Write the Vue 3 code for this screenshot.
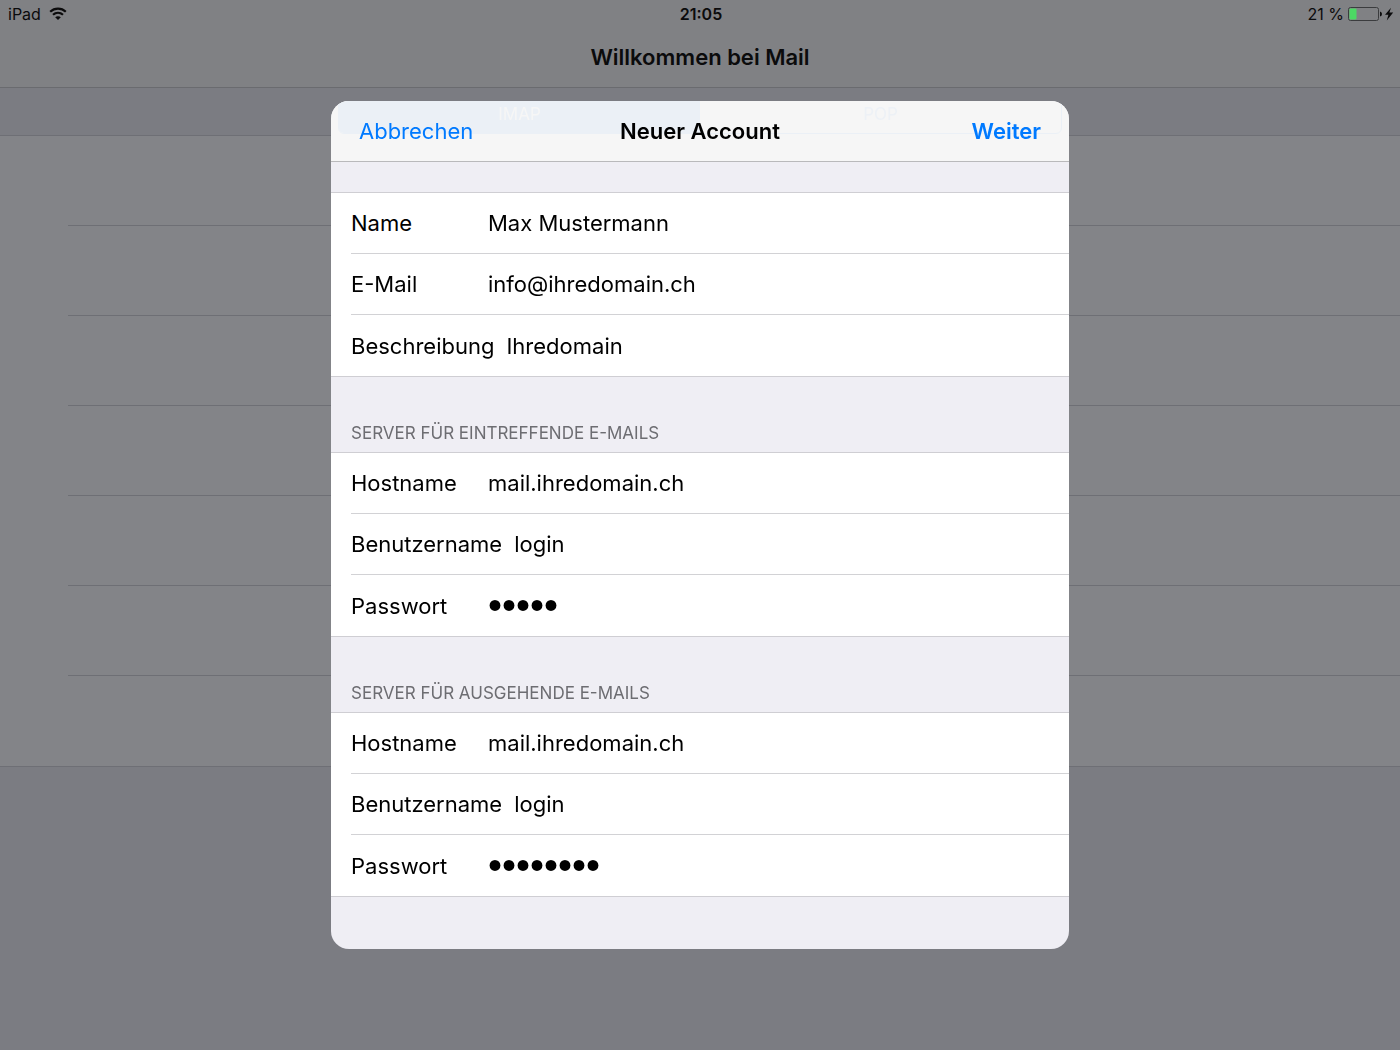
<template>
  <div class="mail">
    <header class="mail__header">
      <div class="status-bar">
        <div class="status-bar__left">
          <span>iPad</span>
          <svg width="18" height="14" viewBox="0 0 18 14" fill="none" stroke="currentColor" stroke-width="2.2" aria-hidden="true">
            <path d="M1.2 4.7C5.6.5 12.4.5 16.8 4.7" />
            <path d="M4 7.8c2.9-2.7 7.1-2.7 10 0" />
            <path d="M6.2 10.2c1.6-1.4 4-1.4 5.6 0L9 13z" fill="currentColor" stroke="none" />
          </svg>
        </div>
        <time class="status-bar__time">21:05</time>
        <div class="status-bar__right">
          <span>21 %</span>
          <svg width="46" height="14" viewBox="0 0 46 14" aria-hidden="true">
            <rect x="0.5" y="0.5" width="30" height="13" rx="2" fill="none" stroke="#3b3c3e" />
            <rect x="1.5" y="1.5" width="7" height="11" rx="1" fill="#4cd964" />
            <path d="M32 4.5q2 .5 2 2.5t-2 2.5z" fill="#0b0b0c" />
            <path d="M43 .8 37 7.8h3.4L38.8 13.4l6.4-7.8h-3.8z" fill="#0b0b0c" />
          </svg>
        </div>
      </div>
      <h1 class="mail__title">Willkommen bei Mail</h1>
    </header>

    <ul class="mail__list">
      <li v-for="n in 7" :key="n" class="mail__row"></li>
    </ul>

    <div class="overlay">
      <form class="account" role="dialog" aria-modal="true" aria-labelledby="accountTitle" @submit.prevent>
        <header class="account__header">
          <div class="segment">
            <button
              v-for="type in types"
              :key="type"
              type="button"
              class="segment__button"
              :class="{ 'segment__button--active': type === selectedType }"
              @click="selectedType = type"
            >{{ type }}</button>
          </div>
          <button type="button" class="account__action">Abbrechen</button>
          <h2 id="accountTitle" class="account__title">Neuer Account</h2>
          <button type="submit" class="account__action account__action--next">Weiter</button>
        </header>

        <section v-for="section in sections" :key="section.id" class="section">
          <h3 v-if="section.title" class="section__title">{{ section.title }}</h3>
          <div class="section__fields">
            <div v-for="field in section.fields" :key="field.id" class="field">
              <label :for="field.id" class="field__label">{{ field.label }}</label>
              <input
                :id="field.id"
                v-model="field.value"
                :type="field.type || 'text'"
                class="field__input"
                autocomplete="off"
                spellcheck="false"
              />
            </div>
          </div>
        </section>
      </form>
    </div>
  </div>
</template>

<script setup>
import { ref } from 'vue'

const types = ['IMAP', 'POP']
const selectedType = ref('IMAP')

const sections = ref([
  {
    id: 'account',
    fields: [
      { id: 'name', label: 'Name', value: 'Max Mustermann' },
      { id: 'email', label: 'E-Mail', value: 'info@ihredomain.ch' },
      { id: 'description', label: 'Beschreibung', value: 'Ihredomain' }
    ]
  },
  {
    id: 'incoming',
    title: 'SERVER FÜR EINTREFFENDE E-MAILS',
    fields: [
      { id: 'inHost', label: 'Hostname', value: 'mail.ihredomain.ch' },
      { id: 'inUser', label: 'Benutzername', value: 'login' },
      { id: 'inPassword', label: 'Passwort', value: 'login', type: 'password' }
    ]
  },
  {
    id: 'outgoing',
    title: 'SERVER FÜR AUSGEHENDE E-MAILS',
    fields: [
      { id: 'outHost', label: 'Hostname', value: 'mail.ihredomain.ch' },
      { id: 'outUser', label: 'Benutzername', value: 'login' },
      { id: 'outPassword', label: 'Passwort', value: 'passwort', type: 'password' }
    ]
  }
])
</script>

<style>
body {
  margin: 0;
  background-color: #7b7c82;
}
</style>

<style scoped>
.mail {
  min-height: 100vh;
  box-sizing: border-box;
  background-color: #7b7c82;
  color: #0b0b0c;
  font-family: Inter, 'Liberation Sans', sans-serif;
}

.mail__header {
  height: 87px;
  background-color: #808184;
  border-bottom: 1px solid #6a6b6f;
}

.status-bar {
  display: grid;
  grid-template-columns: 1fr auto 1fr;
  align-items: center;
  height: 28px;
  padding: 0 6px 0 8px;
  font-size: 16px;
}

.status-bar__left,
.status-bar__right {
  display: flex;
  align-items: center;
  gap: 8px;
}

.status-bar__right {
  justify-content: flex-end;
  gap: 4px;
}

.status-bar__time {
  font-weight: 600;
}

.mail__title {
  margin: 0;
  font-size: 22px;
  font-weight: 600;
  line-height: 58px;
  text-align: center;
}

.mail__list {
  margin: 47px 0 0;
  padding: 0;
  list-style: none;
  background-color: #838488;
  border-top: 1px solid #6e6f75;
  border-bottom: 1px solid #6e6f75;
}

.mail__row {
  height: 89px;
  margin-left: 68px;
  border-bottom: 1px solid #6e6f75;
}

.mail__row:last-child {
  height: 90px;
  border-bottom: none;
}

.overlay {
  position: fixed;
  inset: 0;
  display: flex;
  align-items: center;
  justify-content: center;
}

.account {
  width: 738px;
  max-width: 100%;
  box-sizing: border-box;
  padding-bottom: 52px;
  overflow: hidden;
  background-color: #efeef4;
  border-radius: 18px;
  color: #000;
}

.account__header {
  position: relative;
  display: grid;
  grid-template-columns: 1fr auto 1fr;
  align-items: center;
  height: 60px;
  margin-bottom: 30px;
  padding: 0 28px;
  background-color: #f6f6f6;
  border-bottom: 1px solid #b9b9bb;
}

.account__title {
  position: relative;
  margin: 0;
  font-size: 22px;
  font-weight: 600;
}

.account__action {
  position: relative;
  justify-self: start;
  padding: 0;
  border: none;
  background: none;
  color: #007aff;
  font-family: inherit;
  font-size: 22px;
  cursor: pointer;
}

.account__action--next {
  justify-self: end;
  font-weight: 600;
}

.segment {
  position: absolute;
  top: -8px;
  left: 7px;
  right: 7px;
  display: flex;
  height: 41px;
  box-sizing: border-box;
  overflow: hidden;
  border: 1px solid #ebf0f6;
  border-radius: 6px;
}

.segment__button {
  flex: 1;
  padding: 0;
  border: none;
  background: none;
  color: #edf1f6;
  font-family: inherit;
  font-size: 17px;
}

.segment__button--active {
  background-color: #ebf0f6;
  color: #f6f6f6;
}

.section__title {
  box-sizing: border-box;
  height: 75px;
  margin: 0;
  padding: 45px 20px 0;
  color: #6d6d72;
  font-size: 17px;
  font-weight: 400;
  line-height: 22px;
}

.section__fields {
  padding-left: 20px;
  background-color: #fff;
  border-top: 1px solid #cfced3;
  border-bottom: 1px solid #cfced3;
}

.field {
  display: flex;
  align-items: center;
  gap: 12px;
  box-sizing: border-box;
  height: 61px;
  border-bottom: 1px solid #d2d2d5;
}

.field:last-child {
  border-bottom: none;
}

.field__label {
  min-width: 125px;
  font-size: 22px;
}

.field__input {
  flex: 1;
  min-width: 0;
  padding: 0;
  border: none;
  outline: none;
  background: none;
  color: #000;
  font-family: inherit;
  font-size: 22px;
}

/* Only bullets are drawn here, so the size sets the dots */
.field__input[type='password'] {
  font-family: 'Liberation Sans', Arial, sans-serif;
  font-size: 40px;
}
</style>
